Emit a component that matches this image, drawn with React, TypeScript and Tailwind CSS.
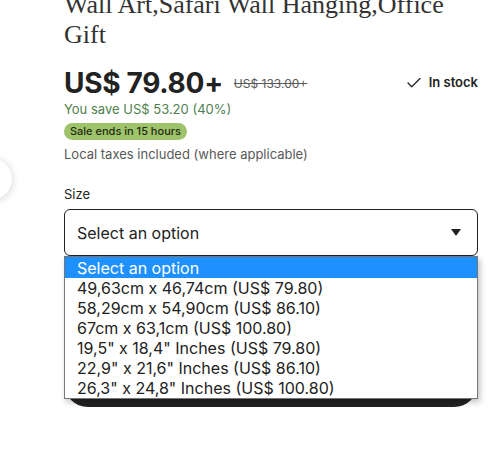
import { Check } from 'lucide-react';

const sizes = [
    '49,63cm x 46,74cm (US$ 79.80)',
    '58,29cm x 54,90cm (US$ 86.10)',
    '67cm x 63,1cm (US$ 100.80)',
    '19,5" x 18,4" Inches (US$ 79.80)',
    '22,9" x 21,6" Inches (US$ 86.10)',
    '26,3" x 24,8" Inches (US$ 100.80)',
];

function Caret() {
    return (
        <svg width="10" height="7" viewBox="0 0 10 7" className="text-[#222]">
            <path d="M0 0h10L5 7z" fill="currentColor" />
        </svg>
    );
}

export default function App() {
    return (
        <div className="relative h-[453px] w-[501px] overflow-hidden bg-white font-['Inter',sans-serif] text-[#222]">
            {/* carousel arrow peeking in from the left */}
            <div className="absolute left-[-30px] top-[158px] h-[42px] w-[42px] rounded-full bg-white shadow-[0_1px_8px_rgba(0,0,0,0.18)]" />

            <div className="ml-16 mr-[23px] -mt-[10px]">
                <h1 className="font-['Liberation_Serif',serif] text-[26px] leading-[30px] text-[#333] whitespace-nowrap">
                    <span className="block">Wall Art,Safari Wall Hanging,Office</span>
                    <span className="block">Gift</span>
                </h1>

                <div className="mt-[16px] flex items-center">
                    <span className="text-[28px] font-bold leading-[34px] tracking-[-0.3px]">US$ 79.80+</span>
                    <span className="ml-[11px] mt-[2px] text-[12px] text-[#595959] line-through">US$ 133.00+</span>
                    <span className="ml-auto flex items-center gap-[6px] text-[13px] font-semibold">
                        <Check size={18} strokeWidth={1.75} />
                        In stock
                    </span>
                </div>

                <p className="mt-[1px] text-[13px] leading-[16px] text-[#4f7f4f]">You save US$ 53.20 (40%)</p>
                <span className="mt-[1px] inline-block rounded-full bg-[#9ec36a] px-[6px] text-[11px] leading-[17px] font-medium text-[#1e2a12]">
                    Sale ends in 15 hours
                </span>
                <p className="mt-[4px] text-[13px] leading-[18px] text-[#595959]">Local taxes included (where applicable)</p>

                <label className="mt-[22px] block text-[13px] leading-[18px] text-[#222]">Size</label>

                <div className="relative mt-[6px]">
                    <div className="flex h-[47px] items-center rounded-[6px] border border-[#222] pl-[12px] pr-[16px] text-[16px]">
                        <span>Select an option</span>
                        <span className="ml-auto">
                            <Caret />
                        </span>
                    </div>

                    {/* native select list, opened */}
                    <div className="absolute left-0 right-0 top-[47px] z-10 border border-[#767676] bg-white text-[16px] leading-[20px] shadow-[2px_3px_6px_rgba(0,0,0,0.25)]">
                        <div className="bg-[#1e90ff] pl-[12px] pt-[1px] text-white">Select an option</div>
                        {sizes.map((s) => (
                            <div key={s} className="pl-[12px]">
                                {s}
                            </div>
                        ))}
                    </div>

                    <div className="mt-[103px] h-[48px] rounded-full bg-[#222]" />
                </div>
            </div>
        </div>
    );
}
